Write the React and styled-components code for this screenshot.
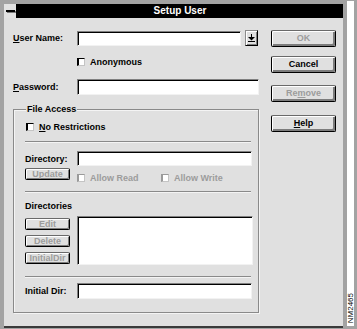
import React from 'react';
import styled, { createGlobalStyle } from 'styled-components';

const FONT = '"Liberation Sans", Arial, sans-serif';

const GlobalStyle = createGlobalStyle`
  html, body {
    margin: 0;
    padding: 0;
    background: #a3a3a3;
  }
  body {
    font-family: ${FONT};
  }
`;

const Screen = styled.div`
  width: 357px;
  height: 329px;
  display: flex;
  background: #a3a3a3;
  overflow: hidden;
`;

const Window = styled.div`
  width: 339px;
  height: 322px;
  margin: 4px 0 0 4px;
  display: flex;
  flex-direction: column;
  border-bottom: 2px solid #3a3a3a;
`;

const TitleRow = styled.div`
  display: flex;
  height: 14px;
  flex: none;
`;

const SysBox = styled.div`
  width: 13px;
  box-sizing: border-box;
  background: #e2e2e2;
  border-right: 1px solid #000;
  display: flex;
  align-items: center;
  justify-content: center;
`;

const SysDash = styled.div`
  width: 9px;
  height: 2px;
  background: #000;
  box-shadow: 1px 1px #7a7a7a;
`;

const TitleBar = styled.div`
  flex: 1;
  background: #000;
  color: #fff;
  font: bold 10px ${FONT};
  line-height: 14px;
  display: flex;
  align-items: center;
  justify-content: center;
`;

const Body = styled.div`
  flex: 1;
  background: #e0e0e0;
  display: flex;
  align-items: flex-start;
  gap: 12px;
  padding: 12px 0 0 9px;
  overflow: hidden;
`;

const LeftCol = styled.div`
  width: 246px;
  display: flex;
  flex-direction: column;
`;

const Row = styled.div`
  display: flex;
  align-items: ${p => p.$align || 'center'};
  margin-top: ${p => p.$mt || 0}px;
  padding-left: ${p => p.$indent || 0}px;
`;

const Label = styled.span`
  width: ${p => p.$w}px;
  flex: none;
  font: bold 9px ${FONT};
  line-height: 10px;
  color: #000;
  white-space: nowrap;
`;

const Field = styled.div`
  box-sizing: border-box;
  width: ${p => p.$w}px;
  height: ${p => p.$h || 16}px;
  background: #fff;
  border-top: 1px solid #808080;
  border-left: 1px solid #808080;
  border-right: 1px solid #f2f2f2;
  border-bottom: 1px solid #f2f2f2;
  box-shadow: inset 1px 1px #000;
  flex: none;
`;

const DropButton = styled.div`
  box-sizing: border-box;
  width: 13px;
  height: 16px;
  margin-left: 4px;
  background: #e0e0e0;
  border: 1px solid #000;
  border-top-color: #8a8a8a;
  border-left-color: #8a8a8a;
  box-shadow: inset 1px 1px #fff, inset -1px -1px #808080;
  display: flex;
  align-items: center;
  justify-content: center;
`;

const Check = styled.span`
  box-sizing: border-box;
  width: 8px;
  height: 8px;
  flex: none;
  background: #fff;
  border-top: 1px solid ${p => (p.$disabled ? '#9a9a9a' : '#000')};
  border-left: 2px solid ${p => (p.$disabled ? '#9a9a9a' : '#000')};
  border-right: 1px solid #c4c4c4;
  border-bottom: 1px solid #c4c4c4;
`;

const CheckItem = styled.label`
  display: flex;
  align-items: center;
  gap: 5px;
  width: ${p => (p.$w ? `${p.$w}px` : 'auto')};
  font: bold 9px ${FONT};
  line-height: 10px;
  color: ${p => (p.$disabled ? '#9c9c9c' : '#000')};
  white-space: nowrap;
`;

const Key = styled.span`
  text-decoration: underline;
`;

const GroupBox = styled.fieldset`
  box-sizing: border-box;
  width: 246px;
  margin: 9px 0 0 0;
  padding: 8px 6px 13px 11px;
  border: 1px solid #8a8a8a;
  box-shadow: 1px 1px #f4f4f4, inset 1px 1px #f4f4f4;
  min-width: 0;
`;

const Legend = styled.legend`
  font: bold 9px ${FONT};
  line-height: 10px;
  padding: 0 1px;
  margin-left: 1px;
  color: #000;
  background: #e0e0e0;
`;

const Separator = styled.div`
  width: 226px;
  height: 1px;
  background: #8a8a8a;
  border-bottom: 1px solid #f4f4f4;
  margin-top: ${p => p.$mt}px;
`;

const SubLabel = styled.div`
  font: bold 9px ${FONT};
  line-height: 10px;
  margin-top: ${p => p.$mt || 0}px;
  color: #000;
`;

const ListArea = styled.div`
  display: flex;
  gap: 7px;
  margin-top: 5px;
`;

const SmallStack = styled.div`
  display: flex;
  flex-direction: column;
  gap: 5px;
  padding-top: 2px;
`;

const PushButton = styled.button`
  box-sizing: border-box;
  width: ${p => (p.$small ? 45 : 65)}px;
  height: ${p => (p.$small ? 12 : 17)}px;
  margin: ${p => p.$mt || 0}px 0 0 0;
  padding: 0;
  flex: none;
  background: #e0e0e0;
  border: 1px solid #000;
  border-top-color: #6a6a6a;
  border-radius: 2px;
  box-shadow: inset 1px 1px #fff, inset ${p => (p.$small ? '-1px -1px' : '-2px -2px')} #7c7c7c;
  font: bold 9px ${FONT};
  line-height: 1;
  color: ${p => (p.disabled ? '#9c9c9c' : '#000')};
  display: flex;
  align-items: center;
  justify-content: center;
`;

const ButtonCol = styled.div`
  width: 65px;
  display: flex;
  flex-direction: column;
`;

const CheckGroup = styled.div`
  display: flex;
  padding-top: 5px;
  margin-left: 7px;
`;

const Strip = styled.div`
  width: 7px;
  height: 325px;
  margin: 1px 0 0 4px;
  background: #fff;
  display: flex;
  align-items: flex-end;
  justify-content: center;
`;

const FigureId = styled.span`
  writing-mode: vertical-rl;
  transform: rotate(180deg);
  font: 8px "Liberation Sans", Arial, sans-serif;
  line-height: 7px;
  color: #000;
  padding-top: 3px;
`;

function ComboArrow() {
  return (
    <svg width="7" height="9" viewBox="0 0 7 9">
      <rect x="3" y="0" width="1" height="5" fill="#000" />
      <polygon points="0,3 7,3 3.5,6.5" fill="#000" />
      <rect x="0" y="7" width="7" height="1" fill="#000" />
    </svg>
  );
}

export default function App() {
  return (
    <>
      <GlobalStyle />
      <Screen>
        <Window>
          <TitleRow>
            <SysBox><SysDash /></SysBox>
            <TitleBar>Setup User</TitleBar>
          </TitleRow>
          <Body>
            <LeftCol>
              <Row>
                <Label $w={64}><Key>U</Key>ser Name:</Label>
                <Field $w={164} $h={15} />
                <DropButton><ComboArrow /></DropButton>
              </Row>
              <Row $mt={11} $indent={64}>
                <CheckItem><Check />Anonymous</CheckItem>
              </Row>
              <Row $mt={12}>
                <Label $w={64}><Key>P</Key>assword:</Label>
                <Field $w={182} />
              </Row>

              <GroupBox>
                <Legend>File Access</Legend>
                <Row $indent={1}>
                  <CheckItem><Check /><span><Key>N</Key>o Restrictions</span></CheckItem>
                </Row>
                <Separator $mt={9} />
                <Row $mt={8}>
                  <Label $w={52}>Directory:</Label>
                  <Field $w={175} $h={15} />
                </Row>
                <Row $mt={2} $align="flex-start">
                  <PushButton $small disabled>Update</PushButton>
                  <CheckGroup>
                    <CheckItem $disabled $w={84}><Check $disabled />Allow Read</CheckItem>
                    <CheckItem $disabled><Check $disabled />Allow Write</CheckItem>
                  </CheckGroup>
                </Row>
                <Separator $mt={8} />
                <SubLabel $mt={8}>Directories</SubLabel>
                <ListArea>
                  <SmallStack>
                    <PushButton $small disabled>Edit</PushButton>
                    <PushButton $small disabled>Delete</PushButton>
                    <PushButton $small disabled>InitialDir</PushButton>
                  </SmallStack>
                  <Field $w={176} $h={49} />
                </ListArea>
                <Separator $mt={11} />
                <Row $mt={5}>
                  <Label $w={52}>Initial Dir:</Label>
                  <Field $w={175} />
                </Row>
              </GroupBox>
            </LeftCol>

            <ButtonCol>
              <PushButton disabled>OK</PushButton>
              <PushButton $mt={9}>Cancel</PushButton>
              <PushButton $mt={12} disabled>Re<Key>m</Key>ove</PushButton>
              <PushButton $mt={13}><Key>H</Key>elp</PushButton>
            </ButtonCol>
          </Body>
        </Window>
        <Strip>
          <FigureId>NM2465</FigureId>
        </Strip>
      </Screen>
    </>
  );
}
